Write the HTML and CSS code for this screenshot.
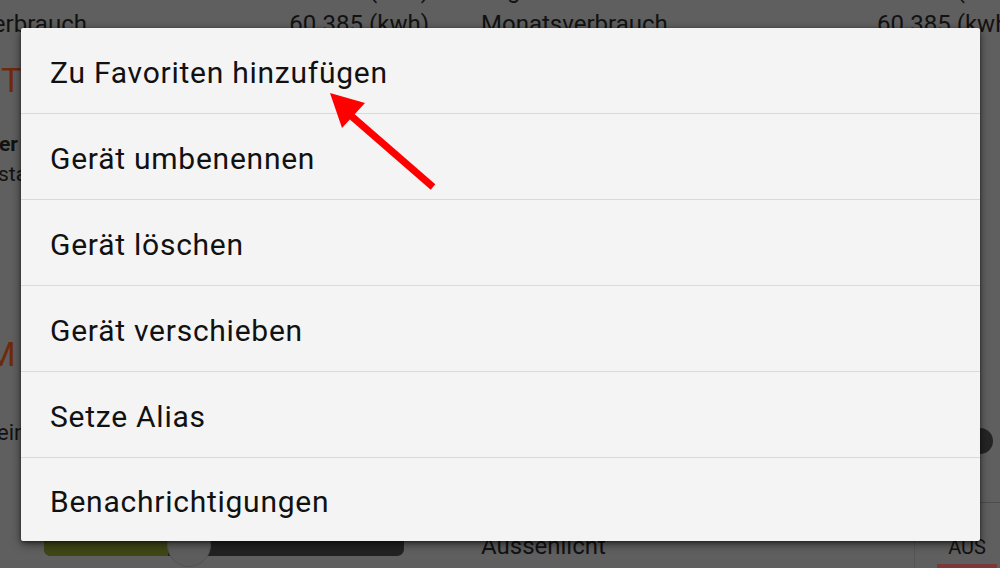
FILE: index.html
```html
<!DOCTYPE html>
<html lang="de">
<head>
<meta charset="utf-8">
<title>Gerät Menü</title>
<link rel="stylesheet" href="styles.css">
</head>
<body>
<div class="screen">
  <div class="page">
    <div class="stat-row stat-row-prev">
      <div class="stat-col left"><span class="label">Jahresverbrauch</span><span class="value">60.385 (kwh)</span></div>
      <div class="stat-col right"><span class="label">Tagesverbrauch</span><span class="value">60.385 (kwh)</span></div>
    </div>
    <div class="stat-row">
      <div class="stat-col left"><span class="label">Wochenverbrauch</span><span class="value">60.385 (kwh)</span></div>
      <div class="stat-col right"><span class="label">Monatsverbrauch</span><span class="value">60.385 (kwh)</span></div>
    </div>
    <div class="heading first">T</div>
    <div class="device">
      <div class="device-name">er</div>
      <div class="device-state">sta</div>
    </div>
    <div class="heading second">M</div>
    <div class="switch-row">
      <div class="switch-label">ein</div>
      <div class="switch-knob"></div>
    </div>
    <div class="rule-row"></div>
    <div class="light-row">
      <div class="toggle">
        <div class="toggle-on"></div>
        <div class="toggle-thumb"></div>
      </div>
      <div class="light-name">Aussenlicht</div>
      <div class="light-state">
        <span>AUS</span>
        <div class="state-bar"></div>
      </div>
    </div>
  </div>

  <div class="dialog">
    <div class="item">Zu Favoriten hinzufügen</div>
    <div class="item">Gerät umbenennen</div>
    <div class="item">Gerät löschen</div>
    <div class="item">Gerät verschieben</div>
    <div class="item">Setze Alias</div>
    <div class="item last">Benachrichtigungen</div>
  </div>

  <svg class="arrow" width="1000" height="568" viewBox="0 0 1000 568">
    <line x1="349" y1="114" x2="433" y2="187" stroke="#ff0000" stroke-width="7"/>
    <polygon points="330,93 365,103 342,128" fill="#ff0000"/>
  </svg>
</div>
</body>
</html>
```

FILE: styles.css
```css
* { box-sizing: border-box; }

html, body {
  margin: 0;
  padding: 0;
}

body {
  width: 1000px;
  height: 568px;
  overflow: hidden;
  background: #5f5f5f;
  font-family: Roboto, "Liberation Sans", Arial, sans-serif;
}

.screen {
  position: relative;
  width: 1000px;
  height: 568px;
  overflow: hidden;
}

.page {
  display: flex;
  flex-direction: column;
  width: 1000px;
  color: #121212;
}

.stat-row {
  display: flex;
  height: 34px;
  font-size: 24px;
  line-height: 28px;
  align-items: flex-start;
  padding-top: 8px;
  white-space: nowrap;
}

.stat-row-prev {
  margin-top: -32px;
}

.stat-col {
  display: flex;
  justify-content: space-between;
}

.stat-col.left {
  margin-left: -105px;
  width: 586px;
  padding-right: 52px;
}

.stat-col.right {
  width: 519px;
}

.stat-col.right .value {
  margin-left: auto;
  width: 123px;
  overflow: hidden;
}

.heading {
  color: #6e2a0c;
  font-size: 34px;
  line-height: 40px;
  height: 40px;
  padding-left: 1px;
}

.heading.first {
  margin-top: 24px;
}

.device {
  margin-top: 29px;
  font-size: 21px;
  line-height: 30px;
}

.device-name {
  font-weight: 700;
  margin-left: -1px;
}

.device-state {
  margin-left: -2px;
}

.heading.second {
  margin-top: 145px;
  margin-left: -15px;
}

.switch-row {
  display: flex;
  align-items: flex-start;
  justify-content: space-between;
  margin-top: 44px;
  height: 30px;
  font-size: 22px;
  line-height: 30px;
}

.switch-label {
  margin-left: -3px;
}

.switch-knob {
  width: 26px;
  height: 26px;
  margin-top: 10px;
  margin-right: 7px;
  border-radius: 50%;
  background: #242424;
}

.rule-row {
  margin-top: 54px;
  margin-left: 480px;
  height: 1px;
  background: #4d4d4d;
}

.light-row {
  display: flex;
  align-items: flex-start;
  height: 70px;
}

.toggle {
  position: relative;
  display: flex;
  margin-left: 44px;
  margin-top: 17px;
  width: 360px;
  height: 36px;
  border-radius: 0 0 7px 7px;
  background: #222222;
}

.toggle-on {
  width: 124px;
  height: 36px;
  border-radius: 0 0 0 7px;
  background: #3e4715;
}

.toggle-thumb {
  position: absolute;
  left: 123px;
  top: 3px;
  width: 44px;
  height: 44px;
  border-radius: 50%;
  background: #5d5d5d;
  border: 1px solid #535353;
}

.light-name {
  margin-left: 77px;
  padding-top: 28px;
  font-size: 24px;
  line-height: 30px;
  width: 434px;
  height: 70px;
  border-right: 1px solid #555555;
}

.light-state {
  display: flex;
  flex-direction: column;
  align-items: center;
  margin-left: 22px;
  padding-top: 34px;
  width: 60px;
  font-size: 20px;
  line-height: 20px;
}

.state-bar {
  margin-top: 7px;
  width: 60px;
  height: 6px;
  background: #7a3838;
}

.dialog {
  position: absolute;
  left: 21px;
  top: 28px;
  width: 959px;
  background: #f4f4f4;
  border-radius: 2px;
  box-shadow: 0 3px 10px rgba(0, 0, 0, 0.55), 0 1px 3px rgba(0, 0, 0, 0.4);
  display: flex;
  flex-direction: column;
}

.item {
  height: 86px;
  display: flex;
  align-items: center;
  padding-left: 29px;
  padding-top: 3px;
  font-size: 30px;
  letter-spacing: 0.75px;
  color: #111111;
  border-bottom: 1px solid #dadada;
}

.item.last {
  height: 83px;
  border-bottom: none;
}

.arrow {
  position: absolute;
  left: 0;
  top: 0;
}
```
